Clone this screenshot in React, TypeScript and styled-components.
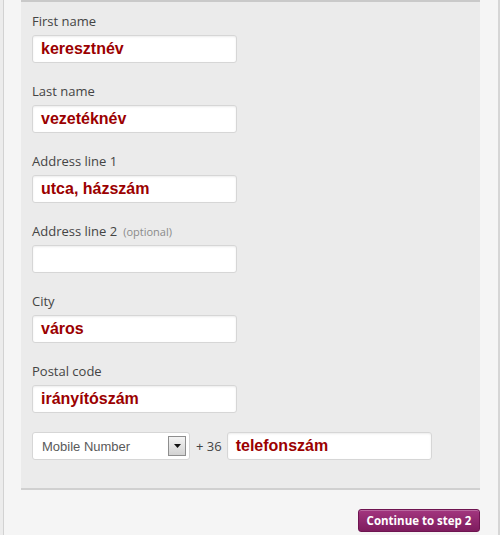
import React from "react";
import styled, { createGlobalStyle } from "styled-components";

const Global = createGlobalStyle`
  html, body { margin: 0; padding: 0; background: #f5f5f5; }
  body { font-family: "Open Sans", "Liberation Sans", sans-serif; }
`;

const Page = styled.div`
  box-sizing: border-box;
  width: 500px;
  height: 535px;
  border-left: 3px solid #ececec;
  border-right: 2px solid #d6d6d6;
  background: #f5f5f5;
  overflow: hidden;
`;

const Frame = styled.div`
  box-sizing: border-box;
  height: 100%;
  border-left: 1px solid #d2d2d2;
  padding-left: 17px;
  display: flex;
  flex-direction: column;
  width: 477px;
`;

const Panel = styled.div`
  box-sizing: border-box;
  width: 459px;
  height: 490px;
  background: #ebebeb;
  border-top: 2px solid #c9c9c9;
  border-bottom: 2px solid #d0d0d0;
  padding: 10px 0 0 11px;
  display: flex;
  flex-direction: column;
`;

const Field = styled.div`
  display: flex;
  flex-direction: column;
  height: 70px;
`;

const Label = styled.label`
  font-family: "Open Sans", sans-serif;
  font-size: 13px;
  color: #444;
  line-height: 18px;
  height: 23px;
`;

const Optional = styled.span`
  font-size: 11px;
  color: #8a8a8a;
  margin-left: 6px;
`;

const Input = styled.div<{ $w?: number }>`
  box-sizing: border-box;
  width: ${(p) => p.$w ?? 205}px;
  height: 28px;
  background: #fff;
  border: 1px solid #d6d6d6;
  border-radius: 3px;
  box-shadow: inset 0 1px 2px rgba(0,0,0,0.08);
  padding: 0 0 0 8px;
  display: flex;
  align-items: center;
  font-family: "Liberation Sans", Arial, sans-serif;
  font-weight: bold;
  font-size: 16px;
  color: #9b0000;
`;

const PhoneRow = styled.div`
  display: flex;
  align-items: center;
  margin-top: 0;
`;

const Select = styled.div`
  box-sizing: border-box;
  width: 158px;
  height: 28px;
  background: #fff;
  border: 1px solid #d6d6d6;
  border-radius: 3px;
  display: flex;
  align-items: center;
  justify-content: space-between;
  padding: 0 3px 0 9px;
  font-family: "Liberation Sans", Arial, sans-serif;
  font-size: 13px;
  color: #5a5a5a;
`;

const Arrow = styled.div`
  box-sizing: border-box;
  width: 18px;
  height: 20px;
  border: 1px solid #8e8e8e;
  background: linear-gradient(#f4f4f4, #d2d2d2);
  display: flex;
  align-items: center;
  justify-content: center;
`;

const Prefix = styled.span`
  font-family: "Open Sans", sans-serif;
  font-size: 13px;
  color: #444;
  margin: 0 5px 0 6px;
`;

const Footer = styled.div`
  display: flex;
  justify-content: flex-end;
  width: 459px;
  padding-top: 19px;
`;

const Button = styled.button`
  box-sizing: border-box;
  width: 122px;
  height: 23px;
  border: 1px solid #6e1450;
  border-radius: 3px;
  background: linear-gradient(#a3367f, #7e1c5e);
  color: #fff;
  font-family: "Open Sans", sans-serif;
  font-weight: bold;
  font-size: 11.5px;
  padding: 0;
  box-shadow: inset 0 1px 0 rgba(255,255,255,0.25);
`;

const fields: { label: string; value: string; optional?: boolean }[] = [
  { label: "First name", value: "keresztnév" },
  { label: "Last name", value: "vezetéknév" },
  { label: "Address line 1", value: "utca, házszám" },
  { label: "Address line 2", value: "", optional: true },
  { label: "City", value: "város" },
  { label: "Postal code", value: "irányítószám" },
];

export default function App() {
  return (
    <>
      <Global />
      <Page>
        <Frame>
          <Panel>
            {fields.map((f) => (
              <Field key={f.label}>
                <Label>
                  {f.label}
                  {f.optional && <Optional>(optional)</Optional>}
                </Label>
                <Input>{f.value}</Input>
              </Field>
            ))}
            <PhoneRow>
              <Select>
                <span>Mobile Number</span>
                <Arrow>
                  <svg width="7" height="4" viewBox="0 0 7 4">
                    <path d="M0 0 L7 0 L3.5 4 Z" fill="#111" />
                  </svg>
                </Arrow>
              </Select>
              <Prefix>+ 36</Prefix>
              <Input $w={205}>telefonszám</Input>
            </PhoneRow>
          </Panel>
          <Footer>
            <Button>Continue to step 2</Button>
          </Footer>
        </Frame>
      </Page>
    </>
  );
}
